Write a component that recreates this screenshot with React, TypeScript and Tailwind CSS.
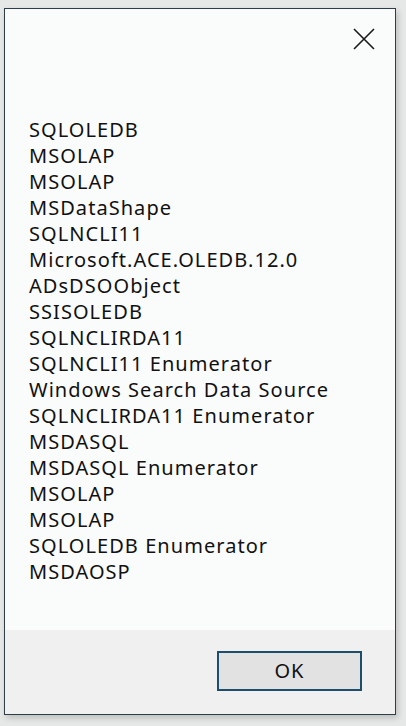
const providers = [
  'SQLOLEDB',
  'MSOLAP',
  'MSOLAP',
  'MSDataShape',
  'SQLNCLI11',
  'Microsoft.ACE.OLEDB.12.0',
  'ADsDSOObject',
  'SSISOLEDB',
  'SQLNCLIRDA11',
  'SQLNCLI11 Enumerator',
  'Windows Search Data Source',
  'SQLNCLIRDA11 Enumerator',
  'MSDASQL',
  'MSDASQL Enumerator',
  'MSOLAP',
  'MSOLAP',
  'SQLOLEDB Enumerator',
  'MSDAOSP',
];

export default function App() {
  return (
    <div
      className="w-[406px] h-[726px] bg-[#e6e7e7] pt-[8px] pl-[4px]"
      style={{ fontFamily: '"Noto Sans", "Open Sans", sans-serif' }}
    >
      {/* Dialog */}
      <div className="w-[392px] h-[707px] flex flex-col border border-[#2e3d47] bg-[#fafbfb] shadow-[2px_3px_6px_rgba(0,0,0,0.18)]">
        <div className="flex justify-end pt-[19px] pr-[20px]">
          <button className="w-[22px] h-[22px] flex items-center justify-center text-[#1a1a1a]">
            <svg width="22" height="22" viewBox="0 0 22 22" fill="none" stroke="currentColor" strokeWidth="1.6">
              <path d="M1 1 L21 21 M21 1 L1 21" />
            </svg>
          </button>
        </div>

        <ul className="flex-1 pt-[67px] pl-[24px] text-[20px] leading-[26px] tracking-[1.05px] text-[#111]">
          {providers.map((p, i) => (
            <li key={i} className="whitespace-nowrap">{p}</li>
          ))}
        </ul>

        {/* Footer */}
        <div className="h-[84px] bg-[#f0f0f0] flex items-start justify-end pt-[21px] pr-[33px]">
          <button className="w-[145px] h-[40px] border-2 border-[#1f4e6c] bg-[#e2e2e2] text-[20px] tracking-[1px] text-[#111] flex items-center justify-center">
            OK
          </button>
        </div>
      </div>
    </div>
  );
}
